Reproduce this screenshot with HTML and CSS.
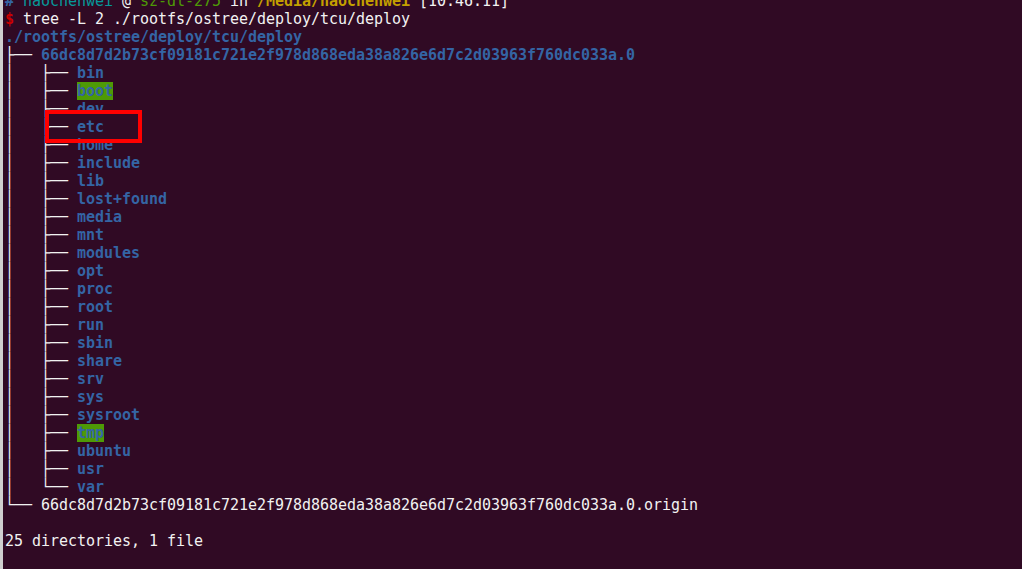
FILE: index.html
```html
<!DOCTYPE html>
<html>
<head>
<meta charset="utf-8">
<link rel="stylesheet" href="styles.css">
</head>
<body>
<div class="terminal">
<pre class="out"><span class="b-blue">#</span> <span class="cyan">haochenwei</span> @ <span class="green">sz-dl-275</span> in <span class="b-yellow">/Media/haochenwei</span> [10:46:11]
<span class="b-red">$</span> tree -L 2 ./rootfs/ostree/deploy/tcu/deploy
<span class="dir">./rootfs/ostree/deploy/tcu/deploy</span>
├── <span class="dir">66dc8d7d2b73cf09181c721e2f978d868eda38a826e6d7c2d03963f760dc033a.0</span>
│   ├── <span class="dir">bin</span>
│   ├── <span class="dir sticky">boot</span>
│   ├── <span class="dir">dev</span>
│   ├── <span class="dir">etc</span>
│   ├── <span class="dir">home</span>
│   ├── <span class="dir">include</span>
│   ├── <span class="dir">lib</span>
│   ├── <span class="dir">lost+found</span>
│   ├── <span class="dir">media</span>
│   ├── <span class="dir">mnt</span>
│   ├── <span class="dir">modules</span>
│   ├── <span class="dir">opt</span>
│   ├── <span class="dir">proc</span>
│   ├── <span class="dir">root</span>
│   ├── <span class="dir">run</span>
│   ├── <span class="dir">sbin</span>
│   ├── <span class="dir">share</span>
│   ├── <span class="dir">srv</span>
│   ├── <span class="dir">sys</span>
│   ├── <span class="dir">sysroot</span>
│   ├── <span class="dir sticky">tmp</span>
│   ├── <span class="dir">ubuntu</span>
│   ├── <span class="dir">usr</span>
│   └── <span class="dir">var</span>
└── 66dc8d7d2b73cf09181c721e2f978d868eda38a826e6d7c2d03963f760dc033a.0.origin

25 directories, 1 file</pre>
<div class="highlight"></div>
</div>
</body>
</html>
```

FILE: styles.css
```css
html, body {
  margin: 0;
  padding: 0;
  height: 100%;
  background: #300a24;
  overflow: hidden;
}

.terminal {
  position: relative;
  display: flow-root;
  height: 100%;
  border-left: 3px solid #cfcfcf;
  box-sizing: border-box;
  padding-left: 2px;
}

.out {
  margin: -8px 0 0 0;
  font-family: "DejaVu Sans Mono", "Liberation Mono", monospace;
  font-size: 15px;
  letter-spacing: -0.03px;
  line-height: 18px;
  color: #f2f2f2;
  white-space: pre;
}

.dir {
  color: #3465a4;
  font-weight: bold;
}

.sticky {
  background: #4e9a06;
}

.b-blue {
  color: #3465a4;
  font-weight: bold;
}

.cyan {
  color: #06989a;
}

.green {
  color: #4e9a06;
}

.b-yellow {
  color: #c4a000;
  font-weight: bold;
}

.b-red {
  color: #cc0000;
  font-weight: bold;
}

.highlight {
  position: absolute;
  left: 42px;
  top: 110px;
  width: 97px;
  height: 33px;
  border: 4px solid #ff0000;
  box-sizing: border-box;
}
```
